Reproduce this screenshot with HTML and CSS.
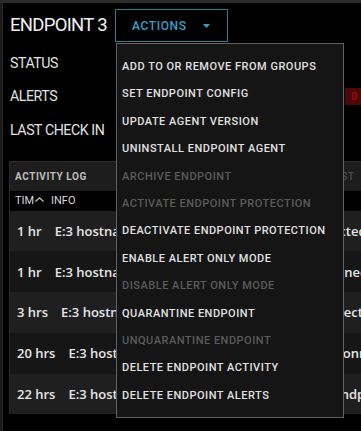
FILE: index.html
```html
<!DOCTYPE html>
<html lang="en">
<head>
<meta charset="utf-8">
<title>Endpoint 3</title>
<link rel="stylesheet" href="styles.css">
</head>
<body>
<div class="app">
  <div class="topbar"></div>
  <div class="main">
    <div class="rail"></div>
    <div class="content">
      <div class="head">
        <h1 class="title">ENDPOINT 3</h1>
        <div class="actions">
          <button class="actions-btn">ACTIONS<svg class="caret" width="7" height="4" viewBox="0 0 7 4"><path d="M0 0H7L3.5 4Z" fill="currentColor"/></svg></button>
          <ul class="menu">
            <li class="item">ADD TO OR REMOVE FROM GROUPS</li>
            <li class="item">SET ENDPOINT CONFIG</li>
            <li class="item">UPDATE AGENT VERSION</li>
            <li class="item">UNINSTALL ENDPOINT AGENT</li>
            <li class="item disabled">ARCHIVE ENDPOINT</li>
            <li class="item disabled">ACTIVATE ENDPOINT PROTECTION</li>
            <li class="item">DEACTIVATE ENDPOINT PROTECTION</li>
            <li class="item">ENABLE ALERT ONLY MODE</li>
            <li class="item disabled">DISABLE ALERT ONLY MODE</li>
            <li class="item">QUARANTINE ENDPOINT</li>
            <li class="item disabled">UNQUARANTINE ENDPOINT</li>
            <li class="item">DELETE ENDPOINT ACTIVITY</li>
            <li class="item">DELETE ENDPOINT ALERTS</li>
          </ul>
        </div>
      </div>
      <div class="props">
        <div class="prop"><span class="label">STATUS</span></div>
        <div class="prop"><span class="label">ALERTS</span><span class="badge">0</span></div>
        <div class="prop"><span class="label">LAST CHECK IN</span></div>
      </div>
      <section class="panel">
        <div class="panel-head"><span class="panel-title">ACTIVITY LOG</span><span class="panel-tab">WHITELIST</span></div>
        <div class="cols"><span class="col-time">TIM<svg class="sort" width="9" height="5" viewBox="0 0 9 5"><path d="M0.5 4.5L4.5 0.8L8.5 4.5" fill="none" stroke="currentColor" stroke-width="1.1"/></svg></span><span class="col-info">INFO</span></div>
        <div class="row alt"><span class="time">1 hr</span><span class="info">E:3 hostname-win10 endpoint has been protected</span></div>
        <div class="row"><span class="time">1 hr</span><span class="info">E:3 hostname-win10a agent has now been connected</span></div>
        <div class="row alt"><span class="time">3 hrs</span><span class="info">E:3 hostname-win7 a malware threat was detected</span></div>
        <div class="row"><span class="time">20 hrs</span><span class="info">E:3 hostname-win10 has now lost network connection</span></div>
        <div class="row alt"><span class="time">22 hrs</span><span class="info">E:3 hostname-win7 was registered as new endpoint</span></div>
      </section>
    </div>
  </div>
</div>
</body>
</html>
```

FILE: styles.css
```css
* { box-sizing: border-box; }
html, body { margin: 0; padding: 0; background: #000; }
body { width: 361px; height: 431px; overflow: hidden; font-family: Roboto, "Liberation Sans", sans-serif; }

.app { height: 431px; display: flex; flex-direction: column; }
.topbar { height: 3px; background: #2c2c2c; flex: none; }
.main { flex: 1; display: flex; }
.rail { width: 3px; flex: none; background: #1b1b1b; border-right: 1px solid #2a2a2a; }
.content { flex: 1; padding-left: 6px; min-width: 0; }

.head { display: flex; align-items: center; gap: 11px; padding-top: 6px; height: 39px; }
.title {
  margin: 0; font-family: Roboto, sans-serif; width: 95px; white-space: nowrap;
  font-weight: 400; font-size: 18.5px; letter-spacing: -0.7px; color: #f2f2f2; line-height: 33px; padding-left: 1px;
}
.actions { position: relative; }
.actions-btn {
  display: flex; align-items: center; width: 113px; height: 33px; padding: 0 0 0 16px;
  background: #000; border: 1px solid #2a7d93; color: #34a2c6;
  font-family: Roboto, sans-serif; font-weight: 500; font-size: 12px; letter-spacing: 0.6px; cursor: pointer;
}
.caret { margin-left: 16px; }

.menu {
  position: absolute; left: 1px; top: 34px; z-index: 5;
  width: 228px; height: 375px; margin: 0; padding: 9px 0 0; list-style: none;
  background: #151515; border: 1px solid #606060;
}
.item {
  height: 27.4px; line-height: 27.4px; padding-left: 5px; white-space: nowrap;
  font-family: Roboto, sans-serif; font-weight: 500; font-size: 11px; letter-spacing: 0.5px; color: #e0e0e0;
}
.item.disabled { color: #5b5b5b; }

.props { padding-top: 4px; }
.prop { height: 33.5px; display: flex; align-items: center; justify-content: space-between; }
.label {
  font-family: Roboto, sans-serif; font-size: 14.2px; letter-spacing: -0.45px; color: #e2e2e2; padding-left: 1px;
}
.badge {
  width: 16px; height: 17px; background: #4f0606; color: #a51010;
  font-size: 11px; display: flex; align-items: center; justify-content: center; padding-left: 2px;
}

.panel { margin-top: 14px; border-left: 1px solid #2b2b2b; }
.panel-head {
  height: 30px; display: flex; align-items: center; padding-left: 5px; background: #1d1d1d;
  border-top: 1px solid #2c2c2c; white-space: nowrap; overflow: hidden;
}
.panel-title { font-family: Roboto, sans-serif; font-weight: 700; font-size: 10px; letter-spacing: 0.55px; color: #bdbdbd; }
.panel-tab { margin-left: 212px; font-family: Roboto, sans-serif; font-weight: 500; font-size: 10px; letter-spacing: 0.55px; color: #4c4c4c; }

.cols {
  height: 20px; display: flex; align-items: center; padding-left: 5px; background: #000;
  font-family: Roboto, sans-serif; font-size: 11px; color: #d8d8d8;
}
.col-time { display: flex; align-items: center; width: 36px; }
.sort { margin-left: 1px; margin-top: -3px; color: #cfcfcf; }

.row {
  height: 40.8px; display: flex; align-items: center; gap: 13px; padding-left: 7px;
  background: #161616; white-space: nowrap; overflow: hidden;
  font-family: "Open Sans", sans-serif; font-weight: 600; font-size: 13px; color: #e6e6e6;
}
.row.alt { background: #1f1f1f; }
```
